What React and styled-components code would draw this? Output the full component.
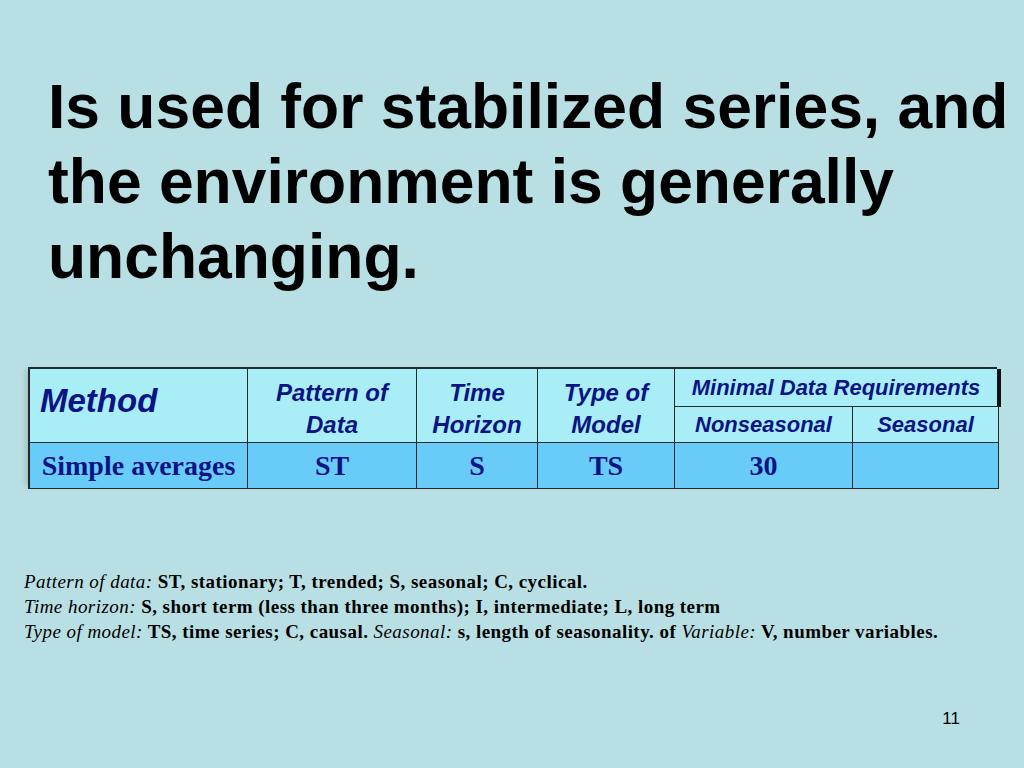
import React from "react";
import styled, { createGlobalStyle } from "styled-components";

const GlobalStyle = createGlobalStyle`
  html, body {
    margin: 0;
    padding: 0;
    background: #b8dfe3;
  }
`;

const Slide = styled.div`
  position: relative;
  width: 1024px;
  height: 768px;
  background: #b8dfe3;
  overflow: hidden;
  display: flex;
  flex-direction: column;
`;

const Title = styled.h1`
  margin: 69px 0 0 48px;
  font-family: "Liberation Sans", Arial, sans-serif;
  font-weight: bold;
  font-size: 62.4px;
  line-height: 75px;
  color: #000;
  white-space: nowrap;
`;

const Table = styled.div`
  margin: 73px 0 0 28px;
  width: 969px;
  display: grid;
  grid-template-columns: 218px 169px 121px 137px 178px 146px;
  grid-template-rows: 38px 36px 46px;
  border-left: 2px solid #1f2b2b;
  border-top: 2px solid #1f2b2b;
  box-sizing: border-box;
  box-shadow: -6px 0 4px -3px rgba(150, 170, 170, 0.5);
`;

const Cell = styled.div`
  box-sizing: border-box;
  border-right: ${(p) => (p.$heavy ? "4px solid #111" : "1.5px solid #1f2b2b")};
  border-bottom: 1.5px solid #1f2b2b;
  background: ${(p) => (p.$data ? "#69ccf8" : "#a9eef6")};
  color: #0b1485;
  display: flex;
  align-items: ${(p) => (p.$top ? "flex-start" : "center")};
  justify-content: ${(p) => (p.$left ? "flex-start" : "center")};
  text-align: center;
  padding: ${(p) => p.$pad || "0"};
  grid-column: ${(p) => p.$col || "auto"};
  grid-row: ${(p) => p.$row || "auto"};
  margin-right: ${(p) => (p.$heavy ? "-2px" : "0")};
  white-space: nowrap;
`;

const HeadText = styled.span`
  font-family: "Liberation Sans", Arial, sans-serif;
  font-weight: bold;
  font-style: italic;
  font-size: ${(p) => p.$size || 20}px;
  line-height: ${(p) => p.$lh || "1.15"};
`;

const DataText = styled.span`
  font-family: "Liberation Serif", "Times New Roman", serif;
  font-weight: bold;
  font-size: ${(p) => p.$size || 28}px;
`;

const Notes = styled.div`
  margin: 81px 0 0 24px;
  font-family: "Liberation Serif", "Times New Roman", serif;
  font-size: 19px;
  letter-spacing: 0.45px;
  color: #000;
`;

const NoteLine = styled.div`
  font-weight: bold;
  line-height: ${(p) => p.$lh || 24}px;
  white-space: nowrap;
`;

const Label = styled.i`
  font-weight: normal;
`;

const PageNumber = styled.div`
  position: absolute;
  right: 64px;
  top: 709px;
  font-family: "Liberation Sans", Arial, sans-serif;
  font-size: 17px;
  color: #000;
`;

export default function App() {
  return (
    <>
      <GlobalStyle />
      <Slide>
        <Title>
          Is used for stabilized series, and
          <br />
          the environment is generally
          <br />
          unchanging.
        </Title>

        <Table>
          <Cell $row="1 / 3" $left $top $pad="13px 0 0 10px">
            <HeadText $size={33}>Method</HeadText>
          </Cell>
          <Cell $row="1 / 3" $pad="6px 0 0 0">
            <HeadText $size={24} $lh="32px">
              Pattern of
              <br />
              Data
            </HeadText>
          </Cell>
          <Cell $row="1 / 3" $pad="6px 0 0 0">
            <HeadText $size={24} $lh="32px">
              Time
              <br />
              Horizon
            </HeadText>
          </Cell>
          <Cell $row="1 / 3" $pad="6px 0 0 0">
            <HeadText $size={24} $lh="32px">
              Type of
              <br />
              Model
            </HeadText>
          </Cell>
          <Cell $col="5 / 7" $heavy>
            <HeadText $size={22}>Minimal Data Requirements</HeadText>
          </Cell>
          <Cell $col="5" $row="2">
            <HeadText $size={22}>Nonseasonal</HeadText>
          </Cell>
          <Cell $col="6" $row="2">
            <HeadText $size={22}>Seasonal</HeadText>
          </Cell>

          <Cell $data>
            <DataText>Simple averages</DataText>
          </Cell>
          <Cell $data>
            <DataText>ST</DataText>
          </Cell>
          <Cell $data>
            <DataText>S</DataText>
          </Cell>
          <Cell $data>
            <DataText>TS</DataText>
          </Cell>
          <Cell $data>
            <DataText>30</DataText>
          </Cell>
          <Cell $data />
        </Table>

        <Notes>
          <NoteLine>
            <Label>Pattern of data:</Label> ST, stationary; T, trended; S, seasonal; C, cyclical.
          </NoteLine>
          <NoteLine $lh={26}>
            <Label>Time horizon:</Label> S, short term (less than three months); I, intermediate; L, long term
          </NoteLine>
          <NoteLine>
            <Label>Type of model:</Label> TS, time series; C, causal. <Label>Seasonal:</Label> s, length of
            seasonality. of <Label>Variable:</Label> V, number variables.
          </NoteLine>
        </Notes>

        <PageNumber>11</PageNumber>
      </Slide>
    </>
  );
}
